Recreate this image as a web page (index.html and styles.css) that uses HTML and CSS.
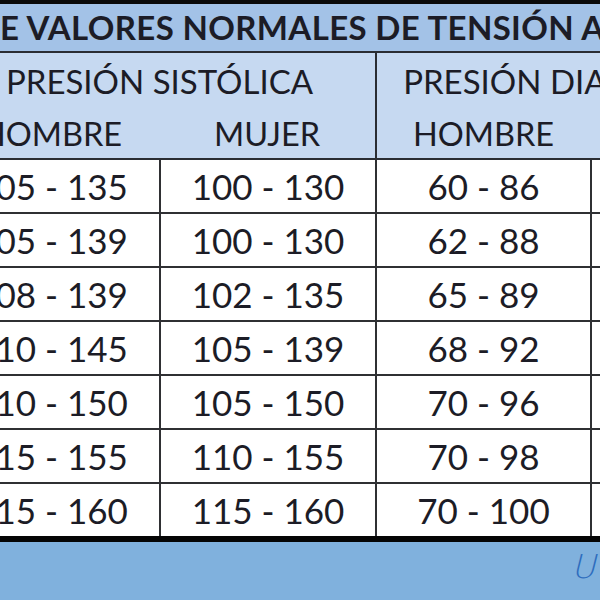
FILE: index.html
```html
<!DOCTYPE html>
<html lang="es">
<head>
<meta charset="utf-8">
<title>Valores normales de tensión arterial</title>
<link rel="stylesheet" href="styles.css">
</head>
<body>
<div class="sheet">
  <div class="title">E VALORES NORMALES DE TENSIÓN A</div>
  <div class="head">
    <div class="hcell span2">PRESIÓN SISTÓLICA</div>
    <div class="hcell span2 sep dia">PRESIÓN DIASTÓLICA</div>
    <div class="hcell">HOMBRE</div>
    <div class="hcell">MUJER</div>
    <div class="hcell sep">HOMBRE</div>
    <div class="hcell">MUJER</div>
  </div>
  <div class="grid">
    <div class="cell">105 - 135</div><div class="cell">100 - 130</div><div class="cell">60 - 86</div><div class="cell">60 - 84</div>
    <div class="cell">105 - 139</div><div class="cell">100 - 130</div><div class="cell">62 - 88</div><div class="cell">60 - 85</div>
    <div class="cell">108 - 139</div><div class="cell">102 - 135</div><div class="cell">65 - 89</div><div class="cell">60 - 86</div>
    <div class="cell">110 - 145</div><div class="cell">105 - 139</div><div class="cell">68 - 92</div><div class="cell">65 - 89</div>
    <div class="cell">110 - 150</div><div class="cell">105 - 150</div><div class="cell">70 - 96</div><div class="cell">65 - 92</div>
    <div class="cell">115 - 155</div><div class="cell">110 - 155</div><div class="cell">70 - 98</div><div class="cell">65 - 95</div>
    <div class="cell">115 - 160</div><div class="cell">115 - 160</div><div class="cell">70 - 100</div><div class="cell">65 - 98</div>
  </div>
  <div class="foot"><span class="mark">U</span></div>
</div>
</body>
</html>
```
FILE: styles.css
```css
html, body {
  margin: 0;
  padding: 0;
  width: 600px;
  height: 600px;
  overflow: hidden;
  background: #80b1dd;
}
.sheet {
  margin-left: -56px;
  width: 862px;
  font-family: Lato, "Open Sans", sans-serif;
  color: #1c1c26;
}
.title {
  box-sizing: border-box;
  height: 53px;
  border-top: 4px solid #0a0a0a;
  border-bottom: 2px solid #2a2d33;
  background: #a3c2e7;
  font-weight: 700;
  font-size: 33px;
  letter-spacing: 0.35px;
  line-height: 46px;
  padding-left: 56px;
  white-space: nowrap;
  overflow: hidden;
}
.head {
  display: grid;
  grid-template-columns: 215px 216px 215px 216px;
  grid-template-rows: 53px 52px;
  background: #c6d9f1;
  border-bottom: 2px solid #2a2d33;
}
.hcell {
  display: flex;
  align-items: center;
  justify-content: center;
  font-size: 32.5px;
  white-space: nowrap;
  padding-top: 2px;
}
.span2 { grid-column: span 2; font-size: 33px; }
.sep { border-left: 2px solid #2a2d33; }
.dia { padding-right: 40px; }
.grid {
  display: grid;
  grid-template-columns: 215px 214px 213px 214px;
  grid-auto-rows: 52px;
  gap: 2px;
  background: #2f3033;
  border-bottom: 6px solid #050505;
}
.cell {
  background: #ffffff;
  display: flex;
  align-items: center;
  justify-content: center;
  font-size: 35px;
  white-space: nowrap;
}
.foot {
  height: 58px;
  display: flex;
  justify-content: flex-end;
  padding-right: 208px;
}
.mark {
  display: inline-block;
  font-family: "DejaVu Sans", sans-serif;
  font-weight: 200;
  font-size: 33px;
  line-height: 58px;
  height: 58px;
  color: #2e6dbd;
  margin-top: -4px;
  transform: skewX(-14deg);
}
```
